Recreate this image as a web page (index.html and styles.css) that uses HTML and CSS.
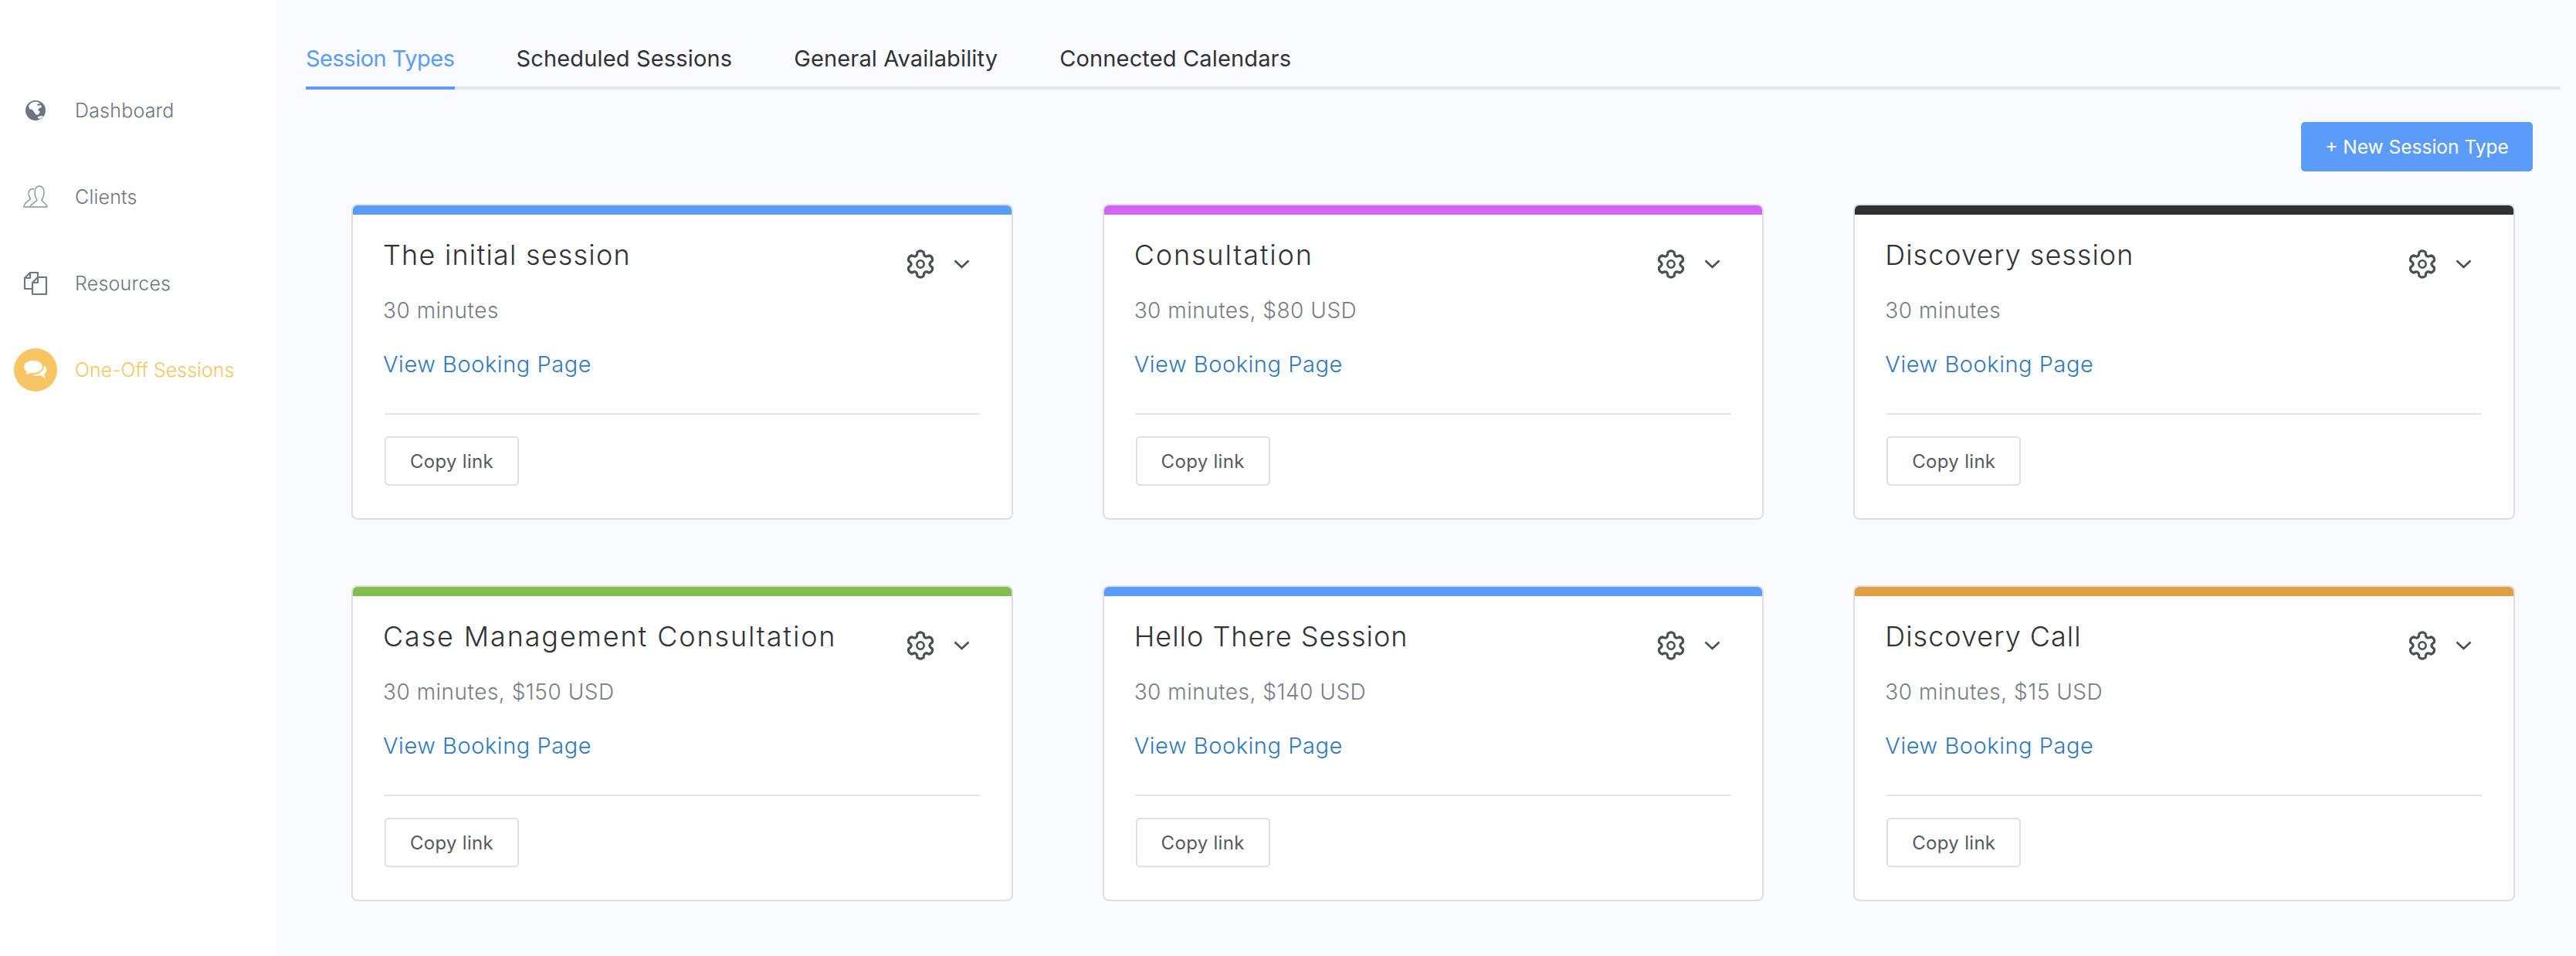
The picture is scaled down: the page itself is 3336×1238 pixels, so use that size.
FILE: index.html
```html
<!DOCTYPE html>
<html lang="en">
<head>
<meta charset="utf-8">
<title>Session Types</title>
<link rel="stylesheet" href="styles.css">
</head>
<body>
<svg class="defs" width="0" height="0" aria-hidden="true">
  <symbol id="gear" viewBox="-18 -18 36 36">
    <path d="M-3.900,-14.500 Q0,-18 3.900,-14.500 Q4,-6.900 10.600,-10.600 Q15.600,-9 14.500,-3.900 Q8,0 14.500,3.900 Q15.600,9 10.600,10.600 Q4,6.900 3.900,14.500 Q0,18 -3.900,14.500 Q-4,6.900 -10.600,10.600 Q-15.600,9 -14.500,3.900 Q-8,0 -14.500,-3.900 Q-15.600,-9 -10.600,-10.600 Q-4,-6.900 -3.900,-14.500 Z" fill="none" stroke="#4a4f55" stroke-width="3" stroke-linejoin="round"/>
    <circle r="4.400" fill="none" stroke="#4a4f55" stroke-width="2.400"/>
  </symbol>
  <symbol id="chev" viewBox="0 0 20 12">
    <path d="M1 1.500 L10 10 L19 1.500" fill="none" stroke="#4a4f55" stroke-width="2.600"/>
  </symbol>
</svg>
<div class="app">
  <nav class="sidebar">
    <a class="nav-item">
      <span class="nav-icon">
        <svg width="28" height="28" viewBox="0 0 28 28"><circle cx="14" cy="14" r="13" fill="#6b7580"/><path d="M5 8 C8 3 12 2 17 3 L20 5 L16 6 L17 8 L21 7 L22 10 L19 11 L17 13 L20 16 L17 20 L14 19 L10 13 L6 12 Z" fill="#fff"/><path d="M17 22 L22 21 L24 22 L20 25 L17 24 Z" fill="#fff"/></svg>
      </span>
      <span class="nav-label">Dashboard</span>
    </a>
    <a class="nav-item">
      <span class="nav-icon">
        <svg width="32" height="30" viewBox="0 0 32 30" fill="none" stroke="#8b939b" stroke-width="1.400" stroke-linejoin="round"><path d="M9 28 C9 24 17 22 18 19 C16 16 15 13 15 8 C15 4 18 1 21 1 C24 1 27 4 27 8 C27 13 26 16 24 19 C25 22 31 24 31 28 Z"/><path d="M14 5 C11 3.500 7 6 7 10 C7 13 8 15.500 9.500 17 C8.500 20 2 21 1 27 L1 28 L9 28"/></svg>
      </span>
      <span class="nav-label">Clients</span>
    </a>
    <a class="nav-item">
      <span class="nav-icon">
        <svg width="32" height="32" viewBox="0 0 32 32" fill="none" stroke="#6f7880" stroke-width="2.200" stroke-linejoin="round"><path d="M12 23 L2 23 L2 9 L9 2 L19 2 L19 8"/><path d="M2 9 L9 9 L9 2"/><path d="M12 15 L19 8 L30 8 L30 30 L12 30 Z"/><path d="M12 15 L19 15 L19 8"/></svg>
      </span>
      <span class="nav-label">Resources</span>
    </a>
    <a class="nav-item is-active">
      <span class="nav-icon nav-icon-active">
        <svg width="32" height="26" viewBox="0 0 32 26" fill="#fff"><path d="M13 1 C6 1 1 4.500 1 9 C1 12 3 14 5 15.500 L3 19 L10 17 C17 18 25 14 25 9 C25 4.500 20 1 13 1 Z"/><path d="M27 7 C28 13 22 19 12 19.500 C15 21 19 21 22 20 L29 24 L27 19 C31 16 32 10 27 7 Z"/></svg>
      </span>
      <span class="nav-label">One-Off Sessions</span>
    </a>
  </nav>
  <main class="main">
    <div class="tabs">
      <a class="tab is-current">Session Types</a>
      <a class="tab">Scheduled Sessions</a>
      <a class="tab">General Availability</a>
      <a class="tab">Connected Calendars</a>
    </div>
    <div class="toolbar"><button class="btn-primary">+ New Session Type</button></div>
    <div class="grid">
      <article class="card bar-blue">
        <div class="card-head"><h2 class="card-title title-mid">The initial session</h2><div class="actions"><svg class="gear"><use href="#gear"/></svg><svg class="chev"><use href="#chev"/></svg></div></div>
        <p class="card-sub">30 minutes</p>
        <a class="card-link">View Booking Page</a>
        <hr class="card-rule">
        <button class="btn-copy">Copy link</button>
      </article>
      <article class="card bar-purple">
        <div class="card-head"><h2 class="card-title title-loose">Consultation</h2><div class="actions"><svg class="gear"><use href="#gear"/></svg><svg class="chev"><use href="#chev"/></svg></div></div>
        <p class="card-sub">30 minutes, $80 USD</p>
        <a class="card-link">View Booking Page</a>
        <hr class="card-rule">
        <button class="btn-copy">Copy link</button>
      </article>
      <article class="card bar-dark">
        <div class="card-head"><h2 class="card-title">Discovery session</h2><div class="actions"><svg class="gear"><use href="#gear"/></svg><svg class="chev"><use href="#chev"/></svg></div></div>
        <p class="card-sub">30 minutes</p>
        <a class="card-link">View Booking Page</a>
        <hr class="card-rule">
        <button class="btn-copy">Copy link</button>
      </article>
      <article class="card bar-green">
        <div class="card-head"><h2 class="card-title title-loose">Case Management Consultation</h2><div class="actions"><svg class="gear"><use href="#gear"/></svg><svg class="chev"><use href="#chev"/></svg></div></div>
        <p class="card-sub">30 minutes, $150 USD</p>
        <a class="card-link">View Booking Page</a>
        <hr class="card-rule">
        <button class="btn-copy">Copy link</button>
      </article>
      <article class="card bar-blue">
        <div class="card-head"><h2 class="card-title">Hello There Session</h2><div class="actions"><svg class="gear"><use href="#gear"/></svg><svg class="chev"><use href="#chev"/></svg></div></div>
        <p class="card-sub">30 minutes, $140 USD</p>
        <a class="card-link">View Booking Page</a>
        <hr class="card-rule">
        <button class="btn-copy">Copy link</button>
      </article>
      <article class="card bar-orange">
        <div class="card-head"><h2 class="card-title">Discovery Call</h2><div class="actions"><svg class="gear"><use href="#gear"/></svg><svg class="chev"><use href="#chev"/></svg></div></div>
        <p class="card-sub">30 minutes, $15 USD</p>
        <a class="card-link">View Booking Page</a>
        <hr class="card-rule">
        <button class="btn-copy">Copy link</button>
      </article>
    </div>
  </main>
</div>
</body>
</html>
```

FILE: styles.css
```css
* { box-sizing: border-box; }
html, body { margin: 0; height: 100%; }
body {
  background: #fafbff;
  font-family: Inter, "Liberation Sans", sans-serif;
  font-weight: 300;
  overflow: hidden;
}
.defs { position: absolute; }
.app { display: flex; min-height: 1238px; }

.sidebar {
  width: 357px;
  flex: none;
  background: #fff;
  padding-top: 87px;
  display: flex;
  flex-direction: column;
}
.nav-item {
  height: 112px;
  display: flex;
  align-items: center;
  padding-left: 18px;
  color: #6b7580;
  font-size: 25px;
  letter-spacing: 0.2px;
}
.nav-icon {
  width: 56px;
  height: 56px;
  flex: none;
  display: flex;
  align-items: center;
  justify-content: center;
  margin-right: 23px;
}
.nav-icon-active { background: #f7c563; border-radius: 50%; }
.nav-item.is-active { color: #f7c563; letter-spacing: 0; }

.main { flex: 1; padding: 0 20px 0 39px; min-width: 0; }
.tabs {
  height: 116px;
  display: flex;
  gap: 80px;
  border-bottom: 4px solid #e6e7ec;
}
.tab {
  height: 116px;
  padding-top: 53px;
  font-size: 29px;
  line-height: 46px;
  font-weight: 400;
  color: #303236;
  letter-spacing: 0.15px;
  white-space: nowrap;
}
.tab.is-current { color: #5b9cf8; border-bottom: 4px solid #5b9cf8; letter-spacing: -0.5px; }

.toolbar { display: flex; justify-content: flex-end; padding: 42px 36px 0 0; }
.btn-primary {
  width: 300px;
  height: 64px;
  border: 0;
  border-radius: 5px;
  background: #5b9cf8;
  color: #fff;
  font: 400 24.500px Inter, "Liberation Sans", sans-serif;
}

.grid {
  display: grid;
  grid-template-columns: repeat(3, 1fr);
  gap: 85px 116px;
  margin: 42px 59px 0 59px;
}
.card {
  height: 409px;
  background: #fff;
  border: 2px solid #dfdfe3;
  border-radius: 8px;
  padding: 12px 41px 0;
  position: relative;
  overflow: hidden;
}
.card::before {
  content: "";
  position: absolute;
  left: 0;
  right: 0;
  top: 0;
  height: 12px;
  background: var(--bar);
}
.bar-blue { --bar: #5b9cf8; }
.bar-purple { --bar: #d265f5; }
.bar-dark { --bar: #2f3033; }
.bar-green { --bar: #82bd4e; }
.bar-orange { --bar: #dfa044; }

.card-head { display: flex; justify-content: space-between; align-items: flex-start; margin-top: 30px; }
.card-title {
  margin: 0 0 0 -2px;
  font-size: 36px;
  line-height: 44px;
  font-weight: 300;
  color: #303236;
  letter-spacing: 1px;
  white-space: nowrap;
}
.title-mid { letter-spacing: 1.200px; }
.title-loose { letter-spacing: 1.850px; }
.actions { display: flex; align-items: center; gap: 24px; margin: 15px 13px 0 0; height: 38px; }
.gear { width: 38px; height: 38px; }
.chev { width: 21px; height: 12px; }
.card-sub {
  margin: 21px 0 0 -2px;
  font-size: 28px;
  line-height: 40px;
  color: #797d82;
  letter-spacing: 0.5px;
}
.card-link {
  display: block;
  margin: 30px 0 0 -2px;
  font-size: 29px;
  line-height: 40px;
  color: #3079bb;
  font-weight: 300;
  letter-spacing: 0.55px;
}
.card-rule { margin: 43px 0 0; border: 0; height: 2px; background: #e4e4e6; }
.btn-copy {
  display: block;
  margin-top: 28px;
  width: 174px;
  height: 64px;
  background: #fff;
  border: 2px solid #e0e0e5;
  border-radius: 5px;
  color: #58595d;
  font: 400 24px Inter, "Liberation Sans", sans-serif;
  letter-spacing: 0.3px;
}
```
